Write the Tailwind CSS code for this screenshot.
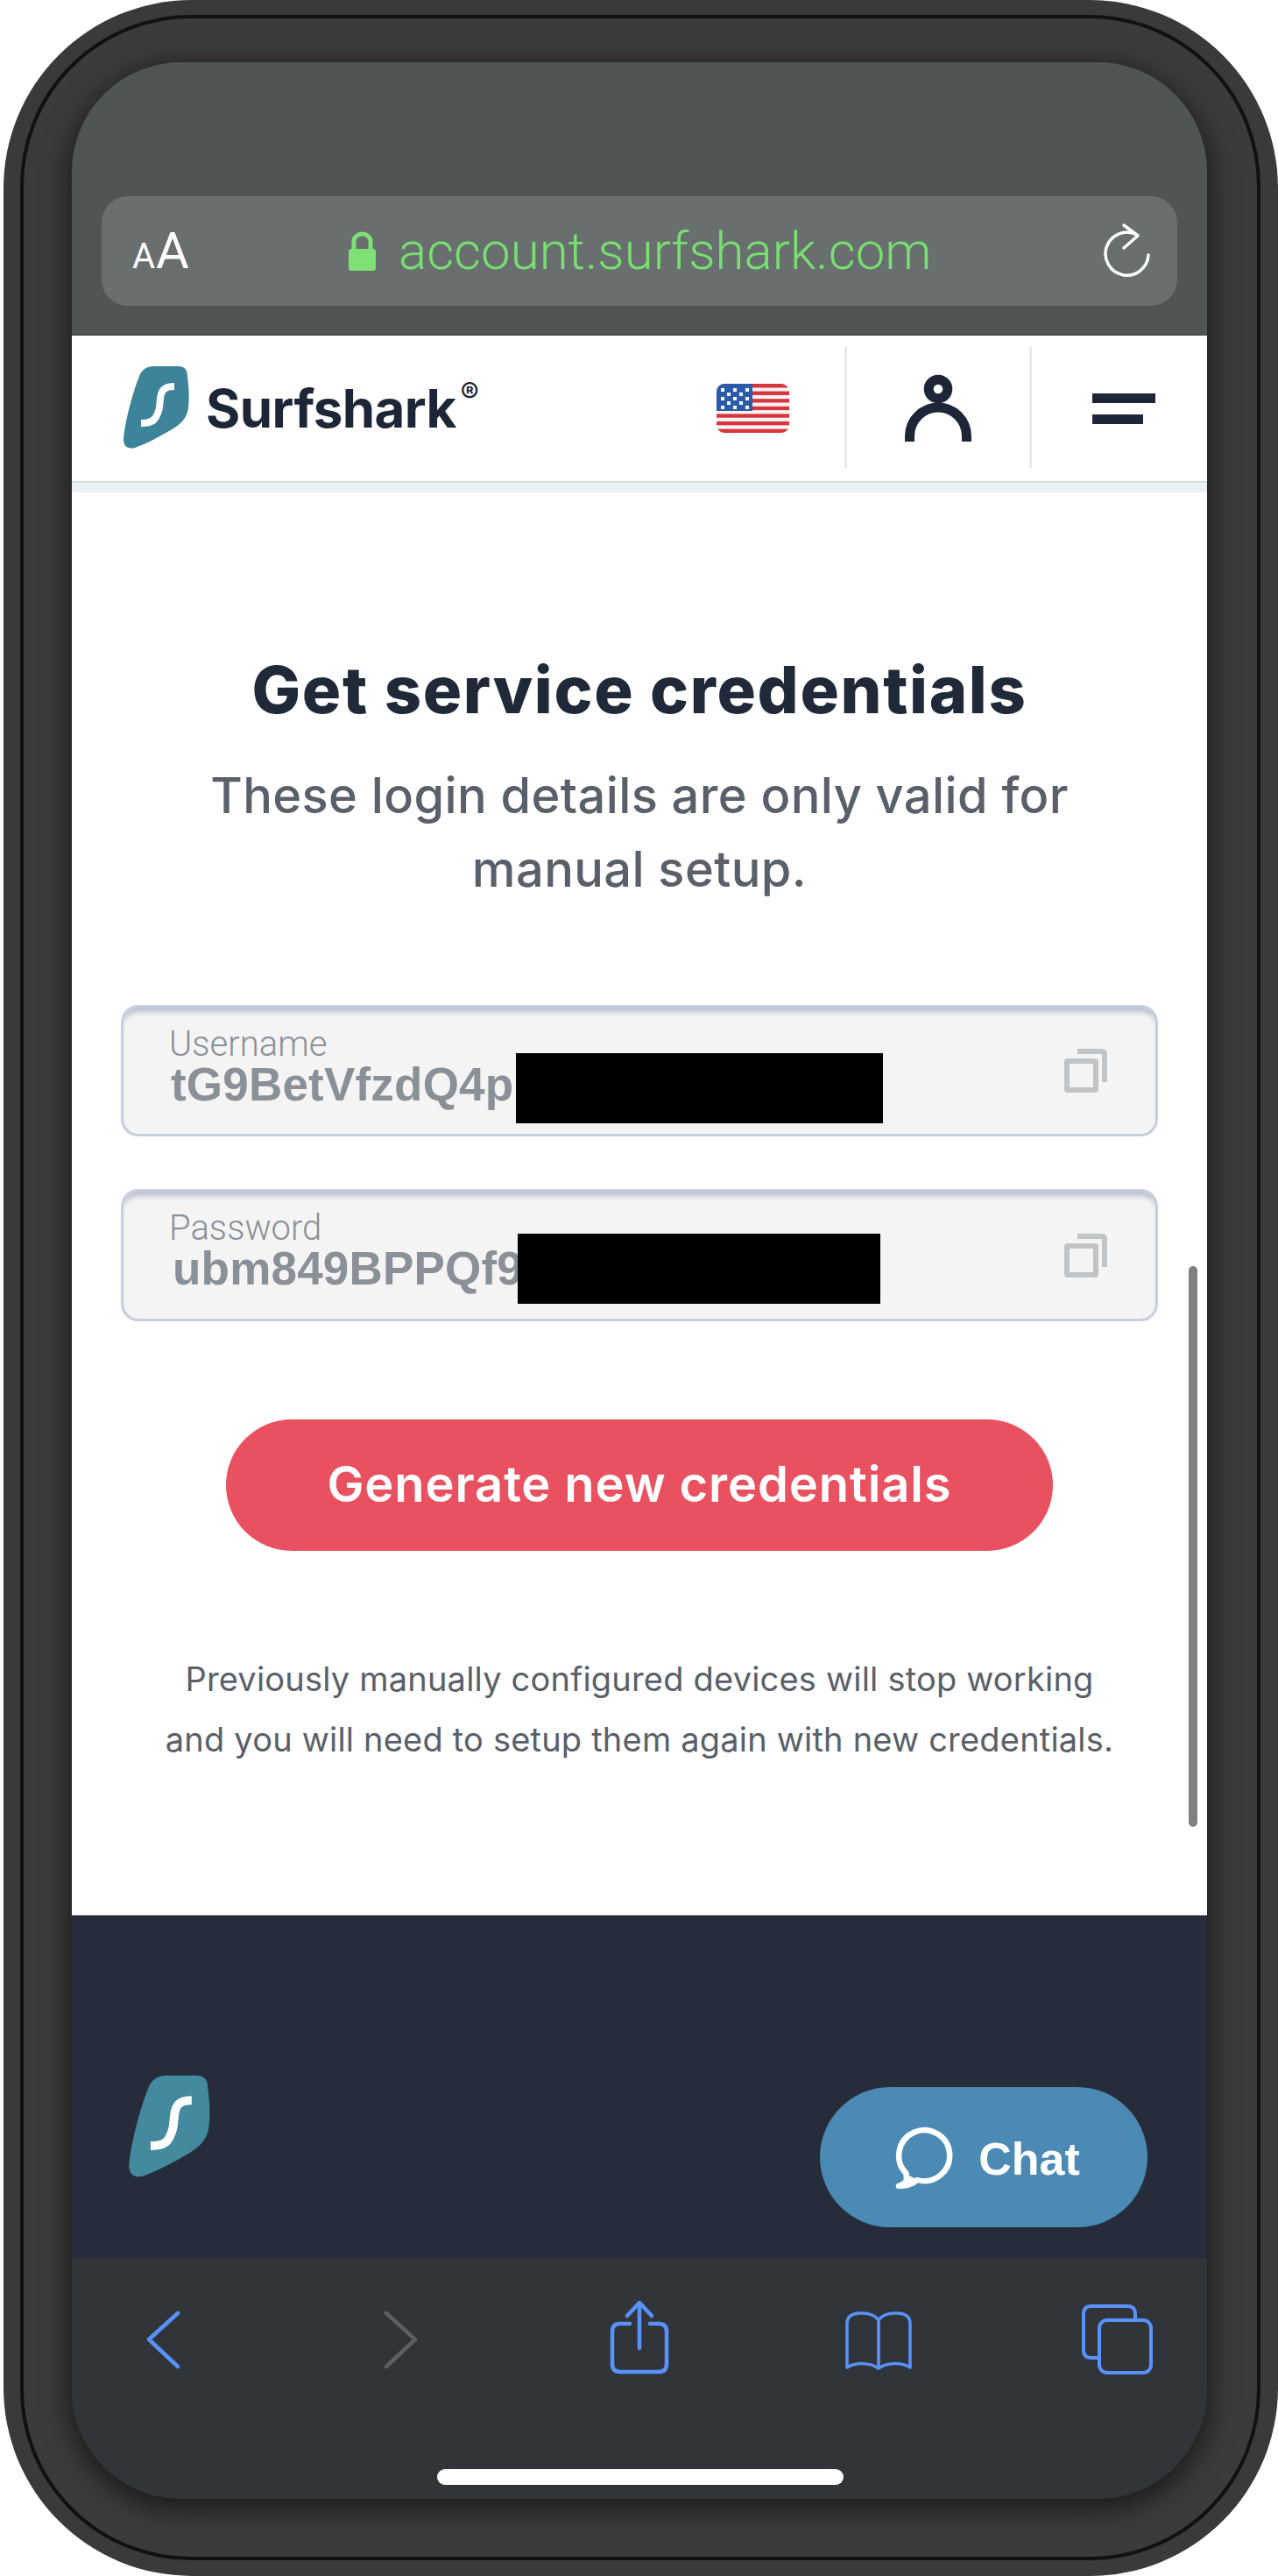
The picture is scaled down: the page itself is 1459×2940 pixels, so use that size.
<!DOCTYPE html>
<html lang="en">
<head>
<meta charset="utf-8">
<title>Surfshark service credentials</title>
<script src="https://cdn.jsdelivr.net/npm/@tailwindcss/browser@4"></script>
</head>
<body class="bg-white">
<div class="ml-[4px] h-[2940px] w-[1455px] rounded-[215px] bg-[#3a3a3a] pt-[17px] pr-[20px] pb-[18px] pl-[19px]">
  <div class="h-[2905px] w-[1416px] rounded-[195px] border-[4px] border-[#111111] bg-[#3b3b3b] pt-[50px] pr-[57px] pb-[66px] pl-[55px]">
    <div class="relative flex h-[2781px] w-[1296px] flex-col overflow-hidden rounded-[125px] shadow-[0_8px_30px_4px_rgb(0_0_0/0.55)]">

      <!-- Safari address bar -->
      <div class="h-[312px] shrink-0 border-b border-[#3f4343] bg-[#4f5454] px-[34px] pt-[153px]">
        <div class="flex h-[125px] items-center rounded-[30px] bg-[#696e6f] font-['Roboto',sans-serif]">
          <div class="ml-[35px] flex w-[66px] items-baseline pt-[6px] text-white">
            <span class="text-[40px] leading-[58px]">A</span><span class="ml-[1px] text-[58px] leading-[58px]">A</span>
          </div>
          <svg class="ml-[179px] h-[48px] w-[35px]" viewBox="395 262 35 48" fill="none">
            <path d="M403 285V274a9.5 8 0 0 1 19 0V285" stroke="#7fe075" stroke-width="5"/>
            <rect x="397" y="283" width="31" height="25" rx="3" fill="#7fe075"/>
          </svg>
          <span class="ml-[24px] text-[60px] leading-[70px] font-light text-[#78e070]">account.surfshark.com</span>
          <svg class="ml-auto mr-[28px] h-[66px] w-[58px]" viewBox="1259 254 58 66" fill="none" stroke="#ffffff" stroke-width="3.5" stroke-linecap="round" stroke-linejoin="round">
            <path d="M1299 268A24.5 24.5 0 1 0 1312 291"/>
            <path d="M1284 257L1300 269L1284 283"/>
          </svg>
        </div>
      </div>

      <!-- Site header -->
      <div class="h-[179px] shrink-0 bg-white">
        <div class="flex h-[166px] items-center">
          <svg class="ml-[58px] h-[98px] w-[77px]" viewBox="9 12 77 98">
            <path d="M27 27C30 17 36 13 45 13L72 13C80 13 83 17 83 25C85 40 85 50 84 60C83 72 75 80 62 87C48 95 35 102 23 106C14 108 10 104 10 96C12 75 20 45 27 27Z" fill="#3d8399"/>
            <path d="M68 36C57 36 53 40 52 50C51 60 51 64 47 71C44 77 38 78 30 78" fill="none" stroke="#ffffff" stroke-width="8"/>
          </svg>
          <div class="ml-[18px] flex items-start font-['Inter',sans-serif] text-[#1d2636]">
            <span class="text-[60px] leading-[72px] font-bold tracking-[-0.6px]">Surfshark</span>
            <span class="ml-[5px] text-[32px] leading-[38px] font-semibold">®</span>
          </div>
          <svg class="ml-auto h-[56px] w-[83px] overflow-hidden rounded-[9px]" viewBox="0 0 83 56">
            <rect width="83" height="56" fill="#f6f2f2"/>
            <g fill="#d8343c">
              <rect y="0" width="83" height="4.5"/><rect y="8.6" width="83" height="4.3"/><rect y="17.2" width="83" height="4.3"/><rect y="25.8" width="83" height="4.3"/><rect y="34.4" width="83" height="4.3"/><rect y="43" width="83" height="4.3"/><rect y="51.6" width="83" height="4.4"/>
            </g>
            <rect width="41" height="31" fill="#2a5caa"/>
            <g fill="#ffffff">
              <rect x="5" y="5" width="4" height="4"/><rect x="19" y="5" width="4" height="4"/><rect x="33" y="5" width="4" height="4"/>
              <rect x="12" y="10" width="4" height="4"/><rect x="26" y="10" width="4" height="4"/>
              <rect x="5" y="15" width="4" height="4"/><rect x="19" y="15" width="4" height="4"/><rect x="33" y="15" width="4" height="4"/>
              <rect x="12" y="20" width="4" height="4"/><rect x="26" y="20" width="4" height="4"/>
              <rect x="5" y="25" width="4" height="4"/><rect x="19" y="25" width="4" height="4"/><rect x="33" y="25" width="4" height="4"/>
            </g>
          </svg>
          <div class="ml-[63px] mt-[-2px] h-[138px] w-[3px] bg-[#e6e8ea]"></div>
          <svg class="ml-[66px] h-[80px] w-[76px]" viewBox="1033 429 76 80" fill="none" stroke="#1d2636">
            <circle cx="1071" cy="447" r="10.8" stroke-width="11"/>
            <path d="M1038.5 507V501A32.5 33 0 0 1 1103.5 501V507" stroke-width="11"/>
          </svg>
          <div class="ml-[66px] mt-[-2px] h-[138px] w-[3px] bg-[#e6e8ea]"></div>
          <div class="ml-[69px] mr-[59px] flex w-[72px] flex-col gap-[13px]">
            <div class="h-[11px] w-[72px] bg-[#1d2636]"></div>
            <div class="h-[11px] w-[58px] bg-[#1d2636]"></div>
          </div>
        </div>
        <div class="h-[13px] border-t-[2px] border-[#d4dbe1] bg-[#eaf2f5]"></div>
      </div>

      <!-- Main content -->
      <div class="relative h-[1624px] shrink-0 bg-white pt-[185px]">
        <h1 class="text-center font-['Inter',sans-serif] text-[74px] leading-[80px] font-extrabold tracking-[1.65px] text-[#1f2937]">Get service credentials</h1>
        <p class="mt-[39px] text-center font-['Inter',sans-serif] text-[56px] leading-[84px] font-medium tracking-[0.4px] text-[#596069]">These login details are only valid for<br>manual setup.</p>

        <div class="relative mx-[56px] mt-[113px] h-[150px] rounded-[20px] border-[3px] border-[#c7cedd] bg-[#f4f4f4] pt-[24px] pl-[52px] shadow-[inset_0_9px_6px_-4px_#b9bfcb]">
          <div class="h-[36px] font-['Roboto',sans-serif] text-[40px] leading-[36px] font-light text-[#8a9097]">Username</div>
          <div class="mt-[6px] ml-[2px] font-['Liberation_Sans',sans-serif] text-[53px] leading-[44px] font-bold tracking-[0.2px] text-[#8a9097]">tG9BetVfzdQ4p</div>
          <div class="absolute top-[52px] left-[448px] h-[80px] w-[419px] bg-black"></div>
          <svg class="absolute top-[47px] right-[55px] h-[50px] w-[49px]" viewBox="0 0 49 50" fill="none" stroke="#c0c4c6" stroke-width="6">
            <rect x="3" y="14" width="33" height="33" rx="1"/>
            <path d="M15 3H43Q46 3 46 6V38"/>
          </svg>
        </div>

        <div class="relative mx-[56px] mt-[60px] h-[151px] rounded-[20px] border-[3px] border-[#c7cedd] bg-[#f4f4f4] pt-[24px] pl-[52px] shadow-[inset_0_9px_6px_-4px_#b9bfcb]">
          <div class="h-[36px] font-['Roboto',sans-serif] text-[40px] leading-[36px] font-light text-[#8a9097]">Password</div>
          <div class="mt-[6px] ml-[4px] font-['Liberation_Sans',sans-serif] text-[53px] leading-[44px] font-bold tracking-[0.2px] text-[#8a9097]">ubm849BPPQf9</div>
          <div class="absolute top-[48px] left-[450px] h-[80px] w-[414px] bg-black"></div>
          <svg class="absolute top-[48px] right-[55px] h-[50px] w-[49px]" viewBox="0 0 49 50" fill="none" stroke="#c0c4c6" stroke-width="6">
            <rect x="3" y="14" width="33" height="33" rx="1"/>
            <path d="M15 3H43Q46 3 46 6V38"/>
          </svg>
        </div>

        <div class="mx-[176px] mt-[112px] flex h-[150px] items-center justify-center rounded-full bg-[#ea5160] pb-[2px] font-['Inter',sans-serif] text-[56px] font-semibold tracking-[0.9px] text-white">Generate new credentials</div>

        <p class="mt-[112px] text-center font-['Inter',sans-serif] text-[38px] leading-[69px] tracking-[0.2px] text-[#596069]">Previously manually configured devices will stop working<br>and you will need to setup them again with new credentials.</p>

        <div class="absolute top-[883px] right-[11px] h-[640px] w-[10px] rounded-full bg-[#808080]"></div>
      </div>

      <!-- Footer -->
      <div class="flex h-[391px] shrink-0 items-start justify-between bg-[#262c3a]">
        <svg class="ml-[64px] mt-[181px] h-[122px] w-[95px]" viewBox="9 12 77 98">
          <path d="M27 27C30 17 36 13 45 13L72 13C80 13 83 17 83 25C85 40 85 50 84 60C83 72 75 80 62 87C48 95 35 102 23 106C14 108 10 104 10 96C12 75 20 45 27 27Z" fill="#438a9f"/>
          <path d="M68 36C57 36 53 40 52 50C51 60 51 64 47 71C44 77 38 78 30 78" fill="none" stroke="#ffffff" stroke-width="8"/>
        </svg>
        <div class="mr-[68px] mt-[196px] flex h-[160px] w-[374px] items-center justify-center gap-[29px] rounded-full bg-[#4a8ab5] pl-[9px]">
          <svg class="h-[71px] w-[66px]" viewBox="0 0 66 71" fill="none">
            <path d="M25 61A29 29 0 1 0 12.5 53.5L13 62Q10 66 4 68Q18 68 25 61Z" stroke="#ffffff" stroke-width="6.5" stroke-linejoin="round"/>
            <path d="M12 54L13 62Q10 66 3 69Q18 69 26 61Z" fill="#ffffff"/>
          </svg>
          <span class="pt-[3px] font-['Liberation_Sans',sans-serif] text-[52px] leading-[60px] font-bold text-white">Chat</span>
        </div>
      </div>

      <!-- Safari toolbar -->
      <div class="flex-1 bg-[#31353a] pt-[49px]">
        <div class="flex h-[84px] pl-[84px]">
          <svg class="h-[84px] w-[40px]" viewBox="166 2626 40 84" fill="none" stroke="#5a92fb" stroke-width="4.5" stroke-linecap="round" stroke-linejoin="round"><path d="M203 2640L170 2670L203 2701"/></svg>
          <svg class="ml-[232px] h-[84px] w-[40px]" viewBox="438 2626 40 84" fill="none" stroke="#5d6063" stroke-width="4.5" stroke-linecap="round" stroke-linejoin="round"><path d="M441 2640L474 2670L441 2701"/></svg>
          <svg class="ml-[217px] h-[84px] w-[70px]" viewBox="695 2626 70 84" fill="none" stroke="#5a92fb" stroke-width="4.5" stroke-linecap="round" stroke-linejoin="round">
            <path d="M719 2652H708Q699 2652 699 2661V2698Q699 2707 708 2707H752Q761 2707 761 2698V2661Q761 2652 752 2652H742"/>
            <path d="M730 2680V2629M716 2643L730 2628L744 2643"/>
          </svg>
          <svg class="ml-[198px] h-[84px] w-[80px]" viewBox="963 2626 80 84" fill="none" stroke="#5a92fb" stroke-width="3.5" stroke-linejoin="round">
            <path d="M1003 2703V2648C999 2642 991 2640 983 2640C973 2640 967 2644 967 2652V2702C977 2696 993 2696 1003 2703C1013 2696 1029 2696 1039 2702V2652C1039 2644 1033 2640 1023 2640C1015 2640 1007 2642 1003 2648"/>
          </svg>
          <svg class="ml-[190px] h-[84px] w-[84px]" viewBox="1233 2626 84 84" fill="none" stroke="#5a92fb" stroke-width="4">
            <path d="M1296 2647V2641Q1296 2632 1287 2632H1246Q1237 2632 1237 2641V2682Q1237 2691 1246 2691H1255"/>
            <rect x="1255" y="2648" width="59" height="60" rx="9"/>
          </svg>
        </div>
        <div class="ml-[417px] mt-[108px] h-[18px] w-[464px] rounded-full bg-white"></div>
      </div>

    </div>
  </div>
</div>
</body>
</html>
